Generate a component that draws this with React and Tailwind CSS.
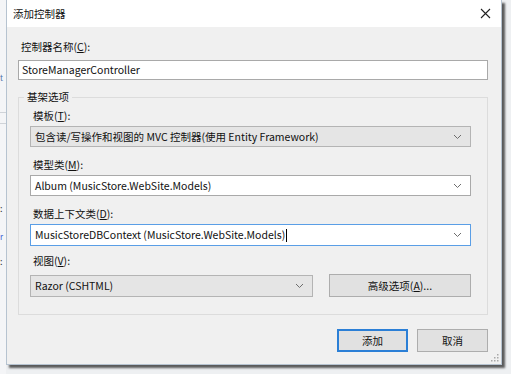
const Chevron = () => (
  <svg width="9" height="6" viewBox="0 0 9 6" className="shrink-0">
    <polyline points="1,1 4.5,4.5 8,1" fill="none" stroke="#6d6d6d" strokeWidth="1" />
  </svg>
);

const Combo = ({ value, disabled, focused, className = "", caret }) => (
  <div
    className={`flex items-center justify-between border pl-[4px] pr-[8px] ${
      disabled ? "bg-[#e5e5e5] border-[#b4b4b4]" : "bg-white"
    } ${focused ? "border-[#5a9ee6]" : disabled ? "" : "border-[#a9a9a9]"} ${className}`}
  >
    <span className="flex items-center whitespace-nowrap text-[#111]">
      {value}
      {caret ? <span className="ml-[1px] inline-block h-[13px] w-px bg-black" /> : null}
    </span>
    <Chevron />
  </div>
);

const Label = ({ text, hotkey, className = "" }) => (
  <div className={`h-[14px] leading-[14px] text-[#111] ${className}`}>
    {text}(<u>{hotkey}</u>):
  </div>
);

const App = () => {
  return (
    <div
      className="relative h-[374px] w-[511px] overflow-hidden bg-[#eef0f2] text-[10.5px]"
      style={{ fontFamily: '"Noto Sans CJK SC", "Noto Sans", sans-serif' }}
    >
      {/* window behind the dialog */}
      <div className="absolute left-0 top-0 h-full w-[6px] bg-[#f4f5f7]">
        <div className="absolute left-0 top-[112px] h-px w-full bg-[#cfd3d8]" />
        <div className="absolute left-0 top-[123px] h-px w-full bg-[#cfd3d8]" />
        <span className="absolute left-0 top-[72px] text-[8px] leading-[12px] text-[#4a6fa8]">t</span>
        <span className="absolute left-0 top-[203px] text-[9px] leading-[12px] text-[#333]">:</span>
        <span className="absolute left-0 top-[231px] text-[8px] leading-[12px] text-[#3b5fd6]">r</span>
        <span className="absolute left-0 top-[256px] text-[9px] leading-[12px] text-[#333]">:</span>
      </div>

      {/* dialog */}
      <div className="absolute left-[6px] top-0 flex h-[365px] w-[496px] flex-col border border-t-0 border-[#b6c3d0] shadow-[3px_3px_2px_rgba(40,40,40,0.75)]">
        <div className="flex h-[27px] shrink-0 items-center justify-between bg-white pl-[6px] pr-[10px]">
          <span className="text-[#111]">添加控制器</span>
          <svg width="11" height="11" viewBox="0 0 11 11">
            <path d="M1 1 L10 10 M10 1 L1 10" stroke="#222" strokeWidth="1.1" />
          </svg>
        </div>

        <div className="relative flex flex-1 flex-col bg-[#f0f0f0] pl-[11px] pr-[13px] pt-[13px]">
          <Label text="控制器名称" hotkey="C" className="pl-[3px]" />
          <div className="mt-[6px] flex h-[20px] items-center border border-[#a9a9a9] bg-white pl-[3px] text-[#111]">
            StoreManagerController
          </div>

          <div className="relative mt-[17px] border border-[#dcdcdc] pb-[17px] pl-[11px] pr-[16px] pt-[11px]">
            <span className="absolute -top-[8px] left-[5px] bg-[#f0f0f0] px-[3px] leading-[14px] text-[#111]">
              基架选项
            </span>
            <Label text="模板" hotkey="T" className="pl-[3px]" />
            <Combo
              className="mt-[3px] h-[21px]"
              disabled
              value="包含读/写操作和视图的 MVC 控制器(使用 Entity Framework)"
            />

            <Label text="模型类" hotkey="M" className="mt-[11px] pl-[3px]" />
            <Combo className="mt-[3px] h-[21px]" value="Album (MusicStore.WebSite.Models)" />

            <Label text="数据上下文类" hotkey="D" className="mt-[11px] pl-[3px]" />
            <Combo
              className="mt-[3px] h-[22px]"
              focused
              caret
              value="MusicStoreDBContext (MusicStore.WebSite.Models)"
            />

            <Label text="视图" hotkey="V" className="mt-[8px] pl-[3px]" />
            <div className="mt-[6px] flex items-center gap-[16px]">
              <Combo className="h-[22px] w-[283px]" disabled value="Razor (CSHTML)" />
              <button
                type="button"
                className="flex h-[23px] flex-1 items-center justify-center border border-[#adadad] bg-[#e1e1e1] text-[#111]"
              >
                高级选项(<u>A</u>)...
              </button>
            </div>
          </div>

          <div className="mt-[14px] flex justify-end gap-[9px]">
            <button
              type="button"
              className="flex h-[23px] w-[71px] items-center justify-center border-2 border-[#2b7fd6] bg-[#e1e1e1] text-[#111]"
            >
              添加
            </button>
            <button
              type="button"
              className="flex h-[23px] w-[71px] items-center justify-center border border-[#adadad] bg-[#e1e1e1] text-[#111]"
            >
              取消
            </button>
          </div>

          <svg width="8" height="8" viewBox="0 0 8 8" className="absolute bottom-[2px] right-[2px]">
            <g fill="#a8a8a8">
              <rect x="6" y="0" width="1.5" height="1.5" />
              <rect x="3" y="3" width="1.5" height="1.5" />
              <rect x="6" y="3" width="1.5" height="1.5" />
              <rect x="0" y="6" width="1.5" height="1.5" />
              <rect x="3" y="6" width="1.5" height="1.5" />
              <rect x="6" y="6" width="1.5" height="1.5" />
            </g>
          </svg>
        </div>
      </div>
    </div>
  );
};

export default App;
